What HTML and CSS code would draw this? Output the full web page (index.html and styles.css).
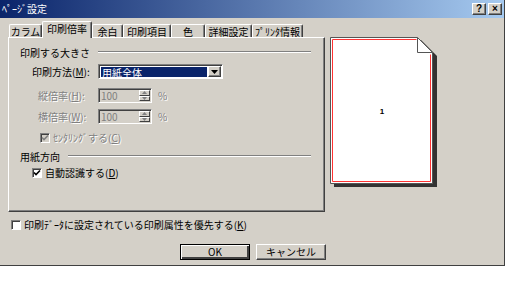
FILE: index.html
```html
<!DOCTYPE html>
<html lang="ja">
<head>
    <meta charset="UTF-8">
    <title>ページ設定</title>
    <link rel="stylesheet" href="styles.css">
</head>
<body>

<div class="dialog">
    <div class="titlebar">
        <span class="title">ﾍﾟｰｼﾞ設定</span>
        <div class="caption-buttons">
            <span class="cap-btn">?</span>
            <span class="cap-btn">×</span>
        </div>
    </div>

    <div class="body">
        <div class="top">
            <div class="left">
                <div class="tabs">
                    <div class="tab w33">カラム</div>
                    <div class="tab active w50">印刷倍率</div>
                    <div class="tab w31">余白</div>
                    <div class="tab w48">印刷項目</div>
                    <div class="tab w34">色</div>
                    <div class="tab w47">詳細設定</div>
                    <div class="tab w51">ﾌﾟﾘﾝﾀ情報</div>
                </div>

                <div class="panel">
                    <div class="group g1">
                        <span>印刷する大きさ</span>
                        <span class="etch"></span>
                    </div>

                    <div class="row method">
                        <span class="label">印刷方法(<u>M</u>):</span>
                        <div class="select">
                            <span class="select-value">用紙全体</span>
                            <span class="drop-btn">
                                <svg width="7" height="4" viewBox="0 0 7 4"><path d="M0 0H7L3.5 4Z" fill="#000"/></svg>
                            </span>
                        </div>
                    </div>

                    <div class="row scale r-tate">
                        <span class="label disabled">縦倍率(<u>H</u>):</span>
                        <div class="spin">
                            <span class="spin-value">100</span>
                            <span class="spin-btns">
                                <span class="spin-btn"><svg width="5" height="3" viewBox="0 0 5 3"><path d="M2.5 0L5 3H0Z" fill="#808080"/></svg></span>
                                <span class="spin-btn"><svg width="5" height="3" viewBox="0 0 5 3"><path d="M0 0H5L2.5 3Z" fill="#808080"/></svg></span>
                            </span>
                        </div>
                        <span class="unit disabled">%</span>
                    </div>

                    <div class="row scale r-yoko">
                        <span class="label disabled">横倍率(<u>W</u>):</span>
                        <div class="spin">
                            <span class="spin-value">100</span>
                            <span class="spin-btns">
                                <span class="spin-btn"><svg width="5" height="3" viewBox="0 0 5 3"><path d="M2.5 0L5 3H0Z" fill="#808080"/></svg></span>
                                <span class="spin-btn"><svg width="5" height="3" viewBox="0 0 5 3"><path d="M0 0H5L2.5 3Z" fill="#808080"/></svg></span>
                            </span>
                        </div>
                        <span class="unit disabled">%</span>
                    </div>

                    <div class="check-row centering">
                        <span class="box off">
                            <svg width="8" height="8" viewBox="0 0 8 8"><path d="M1 3.5L3 5.5L7 1.5" fill="none" stroke="#808080" stroke-width="1.6"/></svg>
                        </span>
                        <span class="disabled">ｾﾝﾀﾘﾝｸﾞする(<u>C</u>)</span>
                    </div>

                    <div class="group g2">
                        <span>用紙方向</span>
                        <span class="etch"></span>
                    </div>

                    <div class="check-row auto">
                        <span class="box">
                            <svg width="8" height="8" viewBox="0 0 8 8"><path d="M1 3.5L3 5.5L7 1.5" fill="none" stroke="#000" stroke-width="1.6"/></svg>
                        </span>
                        <span>自動認識する(<u>D</u>)</span>
                    </div>
                </div>
            </div>

            <div class="preview">
                <svg width="110" height="152" viewBox="0 0 110 152">
                    <path d="M5 4H92L108 20V151H5Z" fill="#333"/>
                    <path d="M1.5 1.5H88.5L103.5 16.5V147.5H1.5Z" fill="#fff" stroke="#555"/>
                    <path d="M88.5 1.5V16.5H103.5" fill="none" stroke="#555"/>
                    <path d="M87.5 3.5H3.5V145.5H101.5V18.5" fill="none" stroke="#f33"/>
                    <text x="53" y="78" font-family="Liberation Sans, sans-serif" font-size="8" font-weight="bold" text-anchor="middle">1</text>
                </svg>
            </div>
        </div>

        <div class="check-row priority">
            <span class="box"></span>
            <span>印刷ﾃﾞｰﾀに設定されている印刷属性を優先する(<u>K</u>)</span>
        </div>

        <div class="buttons">
            <button class="btn default">OK</button>
            <button class="btn">キャンセル</button>
        </div>
    </div>
</div>

</body>
</html>
```

FILE: styles.css
```css
body {
    margin: 0;
    background: #fff;
    font-family: "Noto Sans CJK JP", sans-serif;
    font-size: 10px;
    color: #000;
}

u {
    text-decoration: underline;
    text-underline-offset: 1px;
}

.dialog {
    width: 505px;
    height: 266px;
    box-sizing: border-box;
    background: #d4d0c8;
    border-right: 1px solid #404040;
    border-bottom: 1px solid #404040;
    display: flex;
    flex-direction: column;
}

/* Barre de titre */
.titlebar {
    height: 18px;
    background: linear-gradient(to right, #0a246a, #a6caf0);
    display: flex;
    align-items: center;
    justify-content: space-between;
    padding: 0 2px 0 2px;
    color: #fff;
}

.title {
    line-height: 18px;
}

.caption-buttons {
    display: flex;
    gap: 2px;
}

.cap-btn {
    width: 14px;
    height: 12px;
    box-sizing: border-box;
    background: #d4d0c8;
    border: 1px solid;
    border-color: #fff #404040 #404040 #fff;
    box-shadow: inset -1px -1px #808080;
    color: #000;
    font-family: "Liberation Sans", sans-serif;
    font-weight: bold;
    font-size: 10px;
    line-height: 10px;
    text-align: center;
}

.body {
    padding: 3px 0 0 8px;
}

.top {
    display: flex;
}

/* Onglets */
.tabs {
    display: flex;
    align-items: flex-end;
    height: 16px;
    padding-left: 1px;
}

.tab {
    height: 13px;
    box-sizing: border-box;
    border-top: 1px solid #fff;
    border-left: 1px solid #fff;
    border-right: 1px solid #404040;
    box-shadow: inset -1px 0 #808080;
    border-radius: 2px 2px 0 0;
    text-align: center;
    line-height: 12px;
    padding-top: 1px;
    white-space: nowrap;
}

.tab.active {
    height: 17px;
    margin-bottom: -1px;
    position: relative;
    z-index: 1;
    background: #d4d0c8;
    line-height: 14px;
    padding-top: 0;
}

.w31 { width: 31px; }
.w33 { width: 33px; }
.w34 { width: 34px; }
.w47 { width: 47px; }
.w48 { width: 48px; }
.w50 { width: 50px; }
.w51 { width: 51px; }

.panel {
    width: 317px;
    height: 175px;
    box-sizing: border-box;
    border: 1px solid;
    border-color: #fff #404040 #404040 #fff;
    box-shadow: inset -1px -1px #808080;
    display: flex;
    flex-direction: column;
}

.group {
    display: flex;
    align-items: center;
    height: 14px;
    margin-left: 11px;
    margin-right: 13px;
}

.g1 { margin-top: 7px; }
.g2 { margin-top: 6px; }

.etch {
    flex: 1;
    margin-left: 8px;
    border-top: 1px solid #808080;
    border-bottom: 1px solid #fff;
}

.row {
    display: flex;
    align-items: center;
    height: 15px;
}

.method {
    margin-top: 5px;
    margin-left: 23px;
}

.method .label {
    width: 66px;
}

.scale {
    margin-left: 29px;
}

.scale .label {
    width: 60px;
}

.r-tate { margin-top: 9px; }
.r-yoko { margin-top: 6px; }

.disabled {
    color: #808080;
    text-shadow: 1px 1px 0 #fff;
}

/* Champs */
.select, .spin {
    height: 15px;
    box-sizing: border-box;
    border: 1px solid;
    border-color: #808080 #fff #fff #808080;
    box-shadow: inset 1px 1px #404040;
    display: flex;
    padding: 1px 1px 1px 2px;
}

.select {
    width: 125px;
    background: #fff;
}

.select-value {
    flex: 1;
    background: #0a246a;
    color: #fff;
    line-height: 11px;
    margin: 1px 1px 0 0;
    padding-left: 1px;
}

.drop-btn {
    width: 13px;
    box-sizing: border-box;
    background: #d4d0c8;
    border: 1px solid;
    border-color: #fff #404040 #404040 #fff;
    box-shadow: inset -1px -1px #808080;
    display: flex;
    align-items: center;
    justify-content: center;
}

.spin {
    width: 54px;
    background: #d4d0c8;
}

.spin-value {
    flex: 1;
    color: #808080;
    line-height: 11px;
}

.spin-btns {
    width: 11px;
    display: flex;
    flex-direction: column;
}

.spin-btn {
    flex: 1;
    box-sizing: border-box;
    border: 1px solid;
    border-color: #fff #404040 #404040 #fff;
    display: flex;
    align-items: center;
    justify-content: center;
}

.unit {
    margin-left: 6px;
}

/* Cases à cocher */
.check-row {
    display: flex;
    align-items: center;
    gap: 3px;
    height: 11px;
}

.centering {
    margin-top: 8px;
    margin-left: 31px;
}

.auto {
    margin-top: 4px;
    margin-left: 23px;
}

.priority {
    margin-top: 7px;
    margin-left: 3px;
}

.box {
    width: 10px;
    height: 10px;
    box-sizing: border-box;
    border: 1px solid;
    border-color: #808080 #fff #fff #808080;
    box-shadow: inset 1px 1px #404040;
    background: #fff;
    display: flex;
    align-items: center;
    justify-content: center;
}

.box.off {
    background: #d4d0c8;
}

/* Aperçu */
.preview {
    margin-left: 4px;
    margin-top: 15px;
}

.preview svg {
    display: block;
}

/* Boutons */
.buttons {
    display: flex;
    gap: 6px;
    margin-top: 14px;
    margin-left: 172px;
}

.btn {
    width: 70px;
    height: 16px;
    box-sizing: border-box;
    padding: 0;
    background: #d4d0c8;
    border: 1px solid;
    border-color: #fff #404040 #404040 #fff;
    box-shadow: inset -1px -1px #808080;
    font-family: "Noto Sans CJK JP", sans-serif;
    font-size: 10px;
    line-height: 12px;
    color: #000;
}

.btn.default {
    border: 1px solid #000;
    box-shadow: inset 1px 1px #fff, inset -2px -2px #404040;
}
```
